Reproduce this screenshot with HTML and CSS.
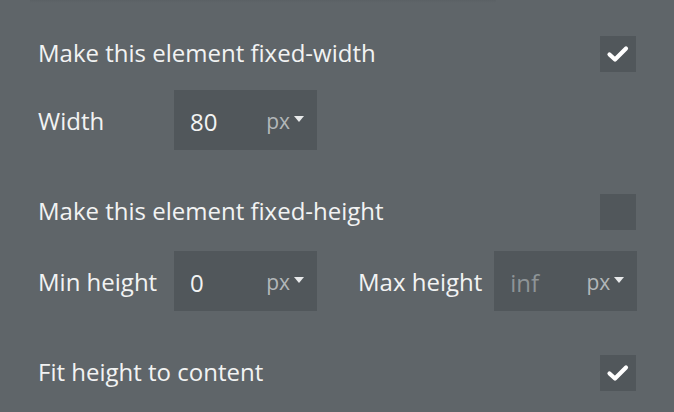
FILE: index.html
```html
<!DOCTYPE html>
<html lang="en">
<head>
  <meta charset="UTF-8" />
  <meta name="viewport" content="width=device-width, initial-scale=1" />
  <title>Element size</title>
  <link rel="stylesheet" href="styles.css">
</head>
<body>
<div class="top-shadow"></div>
<main class="panel">
  <section class="group">
    <div class="check-row">
      <span class="label">Make this element fixed-width</span>
      <span class="checkbox checked">
        <svg viewBox="0 0 36 36" width="36" height="36"><path d="M9.5 18.5 L15 23.5 L26 12.5" /></svg>
      </span>
    </div>
    <div class="field-row">
      <label class="field-label">Width</label>
      <div class="unit-input">
        <span class="value">80</span>
        <span class="unit">px<i class="caret"></i></span>
      </div>
    </div>
  </section>

  <section class="group second">
    <div class="check-row">
      <span class="label">Make this element fixed-height</span>
      <span class="checkbox"></span>
    </div>
    <div class="field-row">
      <label class="field-label">Min height</label>
      <div class="unit-input">
        <span class="value">0</span>
        <span class="unit">px<i class="caret"></i></span>
      </div>
      <label class="field-label max">Max height</label>
      <div class="unit-input">
        <span class="value placeholder">inf</span>
        <span class="unit">px<i class="caret"></i></span>
      </div>
    </div>
  </section>

  <section class="group">
    <div class="check-row">
      <span class="label">Fit height to content</span>
      <span class="checkbox checked">
        <svg viewBox="0 0 36 36" width="36" height="36"><path d="M9.5 18.5 L15 23.5 L26 12.5" /></svg>
      </span>
    </div>
  </section>
</main>
</body>
</html>
```

FILE: styles.css
```css
body {
  margin: 0;
  background: #5f6569;
  color: #f2f3f3;
  font-family: "Open Sans", "Liberation Sans", sans-serif;
  font-size: 24px;
  height: 412px;
  overflow: hidden;
  position: relative;
}
.top-shadow {
  position: absolute;
  top: 0;
  left: 30px;
  width: 466px;
  height: 3px;
  background: linear-gradient(#5b6165, #5f6569);
}
.panel {
  padding: 36px 38px 0 38px;
  display: flex;
  flex-direction: column;
  gap: 44px;
}
.group {
  display: flex;
  flex-direction: column;
  gap: 18px;
}
.group.second {
  gap: 21px;
}
.check-row {
  display: flex;
  align-items: center;
  justify-content: space-between;
  height: 36px;
}
.label {
  margin-top: -3px;
}
.checkbox {
  width: 36px;
  height: 36px;
  background: #51575b;
  display: flex;
  flex-shrink: 0;
}
.checkbox svg path {
  fill: none;
  stroke: #ffffff;
  stroke-width: 4.2;
  stroke-linecap: round;
  stroke-linejoin: round;
}
.field-row {
  display: flex;
  align-items: center;
  height: 60px;
}
.field-label {
  width: 136px;
  flex-shrink: 0;
  white-space: nowrap;
}
.field-label.max {
  width: auto;
  margin-left: 41px;
  margin-right: 12px;
}
.unit-input {
  width: 143px;
  height: 60px;
  flex-shrink: 0;
  box-sizing: border-box;
  background: #51575b;
  display: flex;
  align-items: center;
  justify-content: space-between;
  padding: 2px 13px 0 16px;
}
.value {
  font-size: 24px;
}
.value.placeholder {
  color: #8e9497;
}
.unit {
  color: #b3b7b9;
  font-size: 21px;
  display: flex;
  align-items: center;
}
.caret {
  display: inline-block;
  margin-left: 4px;
  margin-top: -4px;
  border-left: 5.5px solid transparent;
  border-right: 5.5px solid transparent;
  border-top: 6px solid #e8eaeb;
}
```
